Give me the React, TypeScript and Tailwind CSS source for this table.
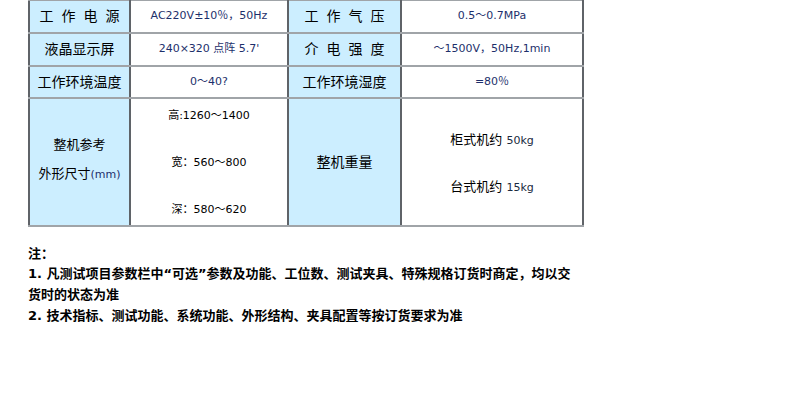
export default function App() {
  const label =
    "bg-[#cceeff] text-black text-[14px] text-center border-x-2 border-x-[#5f6368] border-y-2 border-y-[#a0a4a8]";
  const value =
    "bg-white text-[#1d2f6b] text-[11px] text-center border-x-2 border-x-[#5f6368] border-y-2 border-y-[#a0a4a8]";

  return (
    <div
      className="w-[790px] h-[397px] bg-white overflow-hidden"
      style={{ fontFamily: '"DejaVu Sans", "Noto Sans CJK SC", sans-serif' }}
    >
      <table className="ml-[28px] -mt-[1px] w-[554px] border-collapse table-fixed">
        <colgroup>
          <col className="w-[101px]" />
          <col className="w-[158px]" />
          <col className="w-[113px]" />
          <col className="w-[182px]" />
        </colgroup>
        <tbody>
          <tr className="h-[33px]">
            <td className={`${label} tracking-[8px] pl-[8px]`}>工作电源</td>
            <td className={value}>AC220V±10％，50Hz</td>
            <td className={`${label} tracking-[8px] pl-[8px]`}>工作气压</td>
            <td className={value}>0.5～0.7MPa</td>
          </tr>
          <tr className="h-[33px]">
            <td className={label}>液晶显示屏</td>
            <td className={value}>240×320 点阵 5.7'</td>
            <td className={`${label} tracking-[8px] pl-[8px]`}>介电强度</td>
            <td className={value}>～1500V，50Hz,1min</td>
          </tr>
          <tr className="h-[32px]">
            <td className={label}>工作环境温度</td>
            <td className={value}>0～40?</td>
            <td className={label}>工作环境湿度</td>
            <td className={value}>=80％</td>
          </tr>
          <tr className="h-[128px]">
            <td className={label}>
              <div className="flex flex-col items-center gap-[10px] text-[13px] pb-[6px]">
                <span>整机参考</span>
                <span>
                  外形尺寸<span className="text-[#1d2f6b] text-[11px]">(mm)</span>
                </span>
              </div>
            </td>
            <td className={value}>
              <div className="flex flex-col items-center justify-between h-[124px] pt-[8px] pb-[6px] text-black">
                <span>高:1260～1400</span>
                <span>宽：560～800</span>
                <span>深：580～620</span>
              </div>
            </td>
            <td className={`${label} text-[13px]`}>整机重量</td>
            <td className={value}>
              <div className="flex flex-col items-center gap-[28px] text-[13px] text-black pt-[2px]">
                <span>
                  柜式机约 <span className="text-[11px] text-[#1a2a40]">50kg</span>
                </span>
                <span>
                  台式机约 <span className="text-[11px] text-[#1a2a40]">15kg</span>
                </span>
              </div>
            </td>
          </tr>
        </tbody>
      </table>

      <div className="ml-[28px] mt-[16px] w-[545px] text-[13px] font-bold leading-[21px] text-black">
        <p>注：</p>
        <p className="mt-[-1px]">1. 凡测试项目参数栏中“可选”参数及功能、工位数、测试夹具、特殊规格订货时商定，均以交货时的状态为准</p>
        <p>2. 技术指标、测试功能、系统功能、外形结构、夹具配置等按订货要求为准</p>
      </div>
    </div>
  );
}
